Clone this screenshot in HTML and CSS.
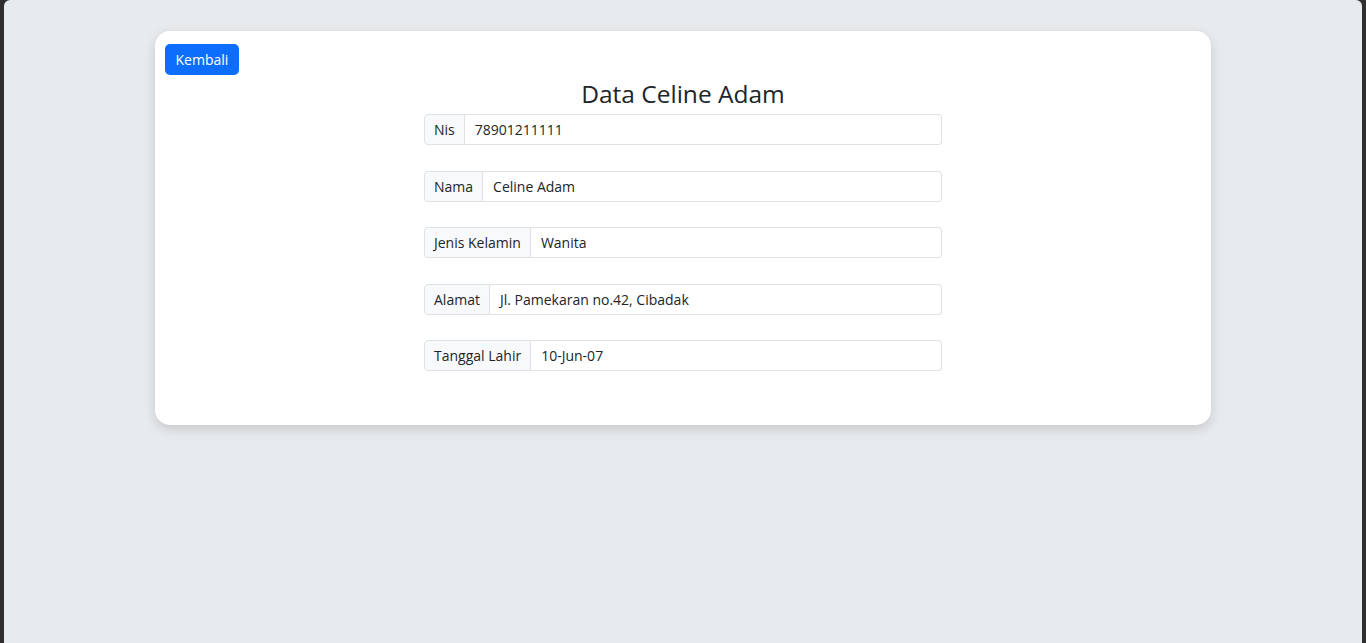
FILE: index.html
```html
<!DOCTYPE html>
<html lang="id">
<head>
<meta charset="utf-8">
<title>Data Celine Adam</title>
<link rel="stylesheet" href="styles.css">
</head>
<body>
<div class="screen">
  <main class="card">
    <div class="card-top">
      <a class="btn" href="#">Kembali</a>
    </div>
    <h3 class="title">Data Celine Adam</h3>
    <div class="fields">
      <div class="group"><span class="label">Nis</span><span class="value">78901211111</span></div>
      <div class="group"><span class="label">Nama</span><span class="value">Celine Adam</span></div>
      <div class="group"><span class="label">Jenis Kelamin</span><span class="value">Wanita</span></div>
      <div class="group"><span class="label">Alamat</span><span class="value">Jl. Pamekaran no.42, Cibadak</span></div>
      <div class="group"><span class="label">Tanggal Lahir</span><span class="value">10-Jun-07</span></div>
    </div>
  </main>
</div>
</body>
</html>
```
FILE: styles.css
```css
* { box-sizing: border-box; }
html, body { margin: 0; padding: 0; height: 100%; }
body {
  background: #2f2f2f;
  font-family: "Open Sans", "Liberation Sans", sans-serif;
  color: #212529;
}
.screen {
  margin: 0 4px;
  height: 643px;
  background: #e8ebee;
  border-radius: 6px 6px 0 0;
  padding-top: 31px;
  overflow: hidden;
}
.card {
  width: 1056px;
  margin: 0 auto;
  background: #fff;
  border-radius: 15px;
  box-shadow: 0 4px 12px rgba(0, 0, 0, 0.15);
  padding: 13px 10px 54px;
}
.card-top { display: flex; }
.btn {
  display: inline-block;
  background: #0d6efd;
  color: #fff;
  text-decoration: none;
  font-size: 14px;
  line-height: 21px;
  padding: 5px 10.5px;
  border-radius: 5px;
}
.title {
  margin: 5px 0 6px;
  text-align: center;
  font-weight: 400;
  font-size: 24.5px;
  line-height: 28px;
  color: #212529;
}
.fields {
  width: 518px;
  margin: 0 auto;
  display: flex;
  flex-direction: column;
  gap: 25.5px;
}
.group {
  display: flex;
  height: 31px;
  font-size: 14px;
}
.label {
  display: flex;
  align-items: center;
  padding: 0 9px;
  background: #f8f9fa;
  border: 1px solid #dee2e6;
  border-radius: 4px 0 0 4px;
  white-space: nowrap;
}
.value {
  flex: 1;
  display: flex;
  align-items: center;
  padding: 0 10px;
  border: 1px solid #dee2e6;
  border-left: 0;
  border-radius: 0 4px 4px 0;
  background: #fff;
}
```
